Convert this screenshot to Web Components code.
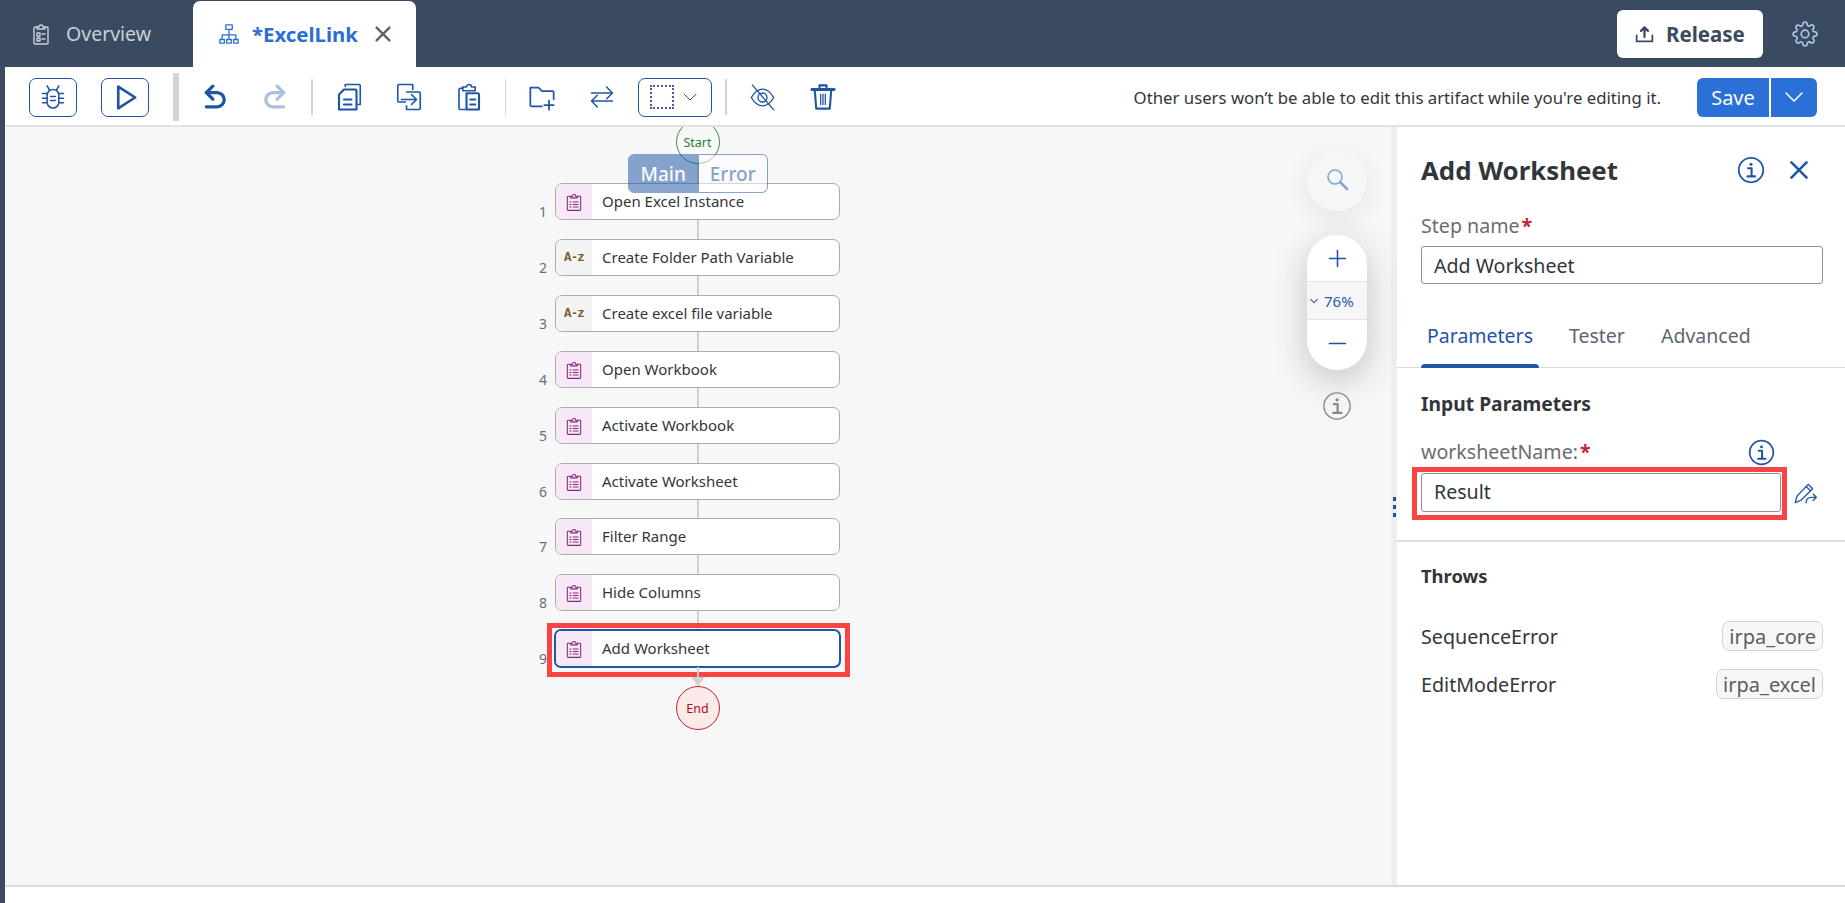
<!DOCTYPE html>
<html lang="en"><head><meta charset="utf-8"><title>ExcelLink</title>
<style>
html,body{margin:0;height:100%;overflow:hidden}
body{font-family:"Noto Sans","Open Sans",sans-serif;color:#32363a}
</style></head>
<body>
<app-shell>
  <app-header slot="header">
    <app-tab icon="overview">Overview</app-tab>
    <app-tab icon="tree" active closable>*ExcelLink</app-tab>
    <release-button slot="actions">Release</release-button>
    <ui-icon slot="actions" name="gear" size="26" style="color:#a9c1e3;margin-left:29px;margin-right:27px"></ui-icon>
  </app-header>
  <app-toolbar slot="toolbar" message="Other users won’t be able to edit this artifact while you're editing it."></app-toolbar>
  <flow-canvas slot="canvas">
    <flow-terminal kind="start">Start</flow-terminal>
    <flow-link></flow-link>
    <flow-step num="1" icon="clip">Open Excel Instance</flow-step><flow-link></flow-link>
    <flow-step num="2" icon="az">Create Folder Path Variable</flow-step><flow-link></flow-link>
    <flow-step num="3" icon="az">Create excel file variable</flow-step><flow-link></flow-link>
    <flow-step num="4" icon="clip">Open Workbook</flow-step><flow-link></flow-link>
    <flow-step num="5" icon="clip">Activate Workbook</flow-step><flow-link></flow-link>
    <flow-step num="6" icon="clip">Activate Worksheet</flow-step><flow-link short></flow-link>
    <flow-step num="7" icon="clip">Filter Range</flow-step><flow-link></flow-link>
    <flow-step num="8" icon="clip">Hide Columns</flow-step><flow-link></flow-link>
    <flow-step num="9" icon="clip" selected>Add Worksheet</flow-step><flow-link arrow></flow-link>
    <flow-terminal kind="end">End</flow-terminal>
    <segment-switch slot="over"></segment-switch>
    <zoom-controls slot="over"></zoom-controls>
  </flow-canvas>
  <side-panel slot="panel"></side-panel>
</app-shell>
<script>
const ICONS={
 overview:'<path d="M8 5H6a1 1 0 0 0-1 1v15a1 1 0 0 0 1 1h12a1 1 0 0 0 1-1V6a1 1 0 0 0-1-1h-2"/><path d="M8 7V5h2a2 2 0 0 1 4 0h2v2z"/><path d="M8 11h3v3H8zM8 16h3v3H8zM13 12h3M13 17h3"/>',
 tree:'<path d="M8.5 2h7v5h-7zM2 18h5v4H2zM9.5 18h5v4h-5zM17 18h5v4h-5zM12 7v11M4.5 18v-5h15v5"/>',
 x:'<path d="M5 5l14 14M19 5L5 19"/>',
 upload:'<path d="M12 16V5M8 9l4-4 4 4" stroke-width="2.6"/><path d="M3 14v7h18v-7" stroke-width="2"/>',
 gear:'<circle cx="12" cy="12" r="3.5"/><path d="M19.4 15a1.65 1.65 0 0 0 .33 1.82l.06.06a2 2 0 0 1 0 2.83 2 2 0 0 1-2.83 0l-.06-.06a1.65 1.65 0 0 0-1.82-.33 1.65 1.65 0 0 0-1 1.51V21a2 2 0 0 1-2 2 2 2 0 0 1-2-2v-.09A1.65 1.65 0 0 0 9 19.4a1.65 1.65 0 0 0-1.82.33l-.06.06a2 2 0 0 1-2.83 0 2 2 0 0 1 0-2.83l.06-.06a1.65 1.65 0 0 0 .33-1.82 1.65 1.65 0 0 0-1.51-1H3a2 2 0 0 1-2-2 2 2 0 0 1 2-2h.09A1.65 1.65 0 0 0 4.6 9a1.65 1.65 0 0 0-.33-1.82l-.06-.06a2 2 0 0 1 0-2.83 2 2 0 0 1 2.83 0l.06.06a1.65 1.65 0 0 0 1.82.33H9a1.65 1.65 0 0 0 1-1.51V3a2 2 0 0 1 2-2 2 2 0 0 1 2 2v.09a1.65 1.65 0 0 0 1 1.51 1.65 1.65 0 0 0 1.82-.33l.06-.06a2 2 0 0 1 2.83 0 2 2 0 0 1 0 2.83l-.06.06a1.65 1.65 0 0 0-.33 1.82V9a1.65 1.65 0 0 0 1.51 1H21a2 2 0 0 1 2 2 2 2 0 0 1-2 2h-.09a1.65 1.65 0 0 0-1.51 1z"/>',
 bug:'<rect x="7" y="5.5" width="10" height="16" rx="5"/><path d="M9 6L7 2.5M15 6l2-3.5M7 9H3M7 13H3M7 17H3M17 9h4M17 13h4M17 17h4M10 11.5h4M10 15h4"/>',
 play:'<path d="M6 3l14 9-14 9z" stroke-width="2.2"/>',
 undo:'<path d="M10 2L4 8l6 6" stroke-width="3"/><path d="M4 8h10a6 6 0 0 1 0 13H4" stroke-width="3"/>',
 redo:'<path d="M14 2l6 6-6 6" stroke-width="3"/><path d="M20 8H10a6 6 0 0 0 0 13h10" stroke-width="3"/>',
 copy:'<path d="M9 3.5V2h11a1 1 0 0 1 1 1v15h-2"/><path d="M8 6h9a1 1 0 0 1 1 1v15H4V10z" stroke-width="1.7"/><path d="M8 14h6M8 18h6" stroke-width="1.7"/>',
 paste2:'<path d="M9 16H4a1 1 0 0 1-1-1V3a1 1 0 0 1 1-1h11v4"/><path d="M10 8h10a1 1 0 0 1 1 1v12a1 1 0 0 1-1 1H10v-3"/><path d="M6 14h11M14 10l4 4-4 4"/>',
 clip:'<path d="M8 5H5a1 1 0 0 0-1 1v15a1 1 0 0 0 1 1h14a1 1 0 0 0 1-1V6a1 1 0 0 0-1-1h-3"/><path d="M8 7V5h2a2 2 0 0 1 4 0h2v2z"/><path d="M11 12h6M11 15h6M11 18h6M7 12h1.5M7 15h1.5M7 18h1.5"/>',
 paste:'<path d="M7 5H5a1 1 0 0 0-1 1v15a1 1 0 0 0 1 1h4"/><path d="M7 7V4h3a2 2 0 0 1 4 0h3v3z"/><path d="M10 9h9a1 1 0 0 1 1 1v12H10z" stroke-width="1.7"/><path d="M13 14h4M13 18h4" stroke-width="1.7"/>',
 folder:'<path d="M12 20H3a1 1 0 0 1-1-1V4h7l3 3h9a1 1 0 0 1 1 1v6" /><path d="M18 15v8M14 19h8" />',
 swap:'<path d="M3 8.500h18M16 3.500l5 5-5 5M21 15.500H3M8 10.500l-5 5 5 5"/>',
 chev:'<path d="M4 8l8 8 8-8"/>',
 eyeoff:'<path d="M2 12c3-5 6.500-7.500 10-7.500S19 7 22 12c-3 5-6.500 7.500-10 7.500S5 17 2 12z"/><circle cx="12" cy="12" r="4"/><path d="M3 1l19 22"/>',
 trash:'<path d="M2.500 5.500h19" stroke-width="2.500"/><path d="M9 4V2h6v2" stroke-width="1.800"/><path d="M5 7l1.200 15h11.600L19 7" stroke-width="1.800"/><path d="M10 9.500v9M12 9.500v9M14 9.500v9" stroke-width="1.100"/>',
 search:'<circle cx="10" cy="10" r="7"/><path d="M15 15l7 7" stroke-width="2.500"/>',
 plus:'<path d="M12 2v20M2 12h20"/>',
 minus:'<path d="M2 12h20"/>',
 info:'<circle cx="12" cy="12" r="10.500"/><circle cx="12" cy="7" r="1.300" fill="currentColor" stroke="none"/><path d="M9.500 10.500H12.500V17.500M9 17.500h6.500" stroke-width="1.800"/>',
 pencil:'<path d="M3 21l1.500-6L15 4l4 4L8.500 18.500z"/><path d="M13 6l4 4"/><path d="M13 21c0-3 2-5 5-5h4M19.500 13l3 3-3 3"/>'
};
const def=(n,c)=>customElements.define(n,c);
const shadow=(el,html)=>{el.attachShadow({mode:'open'}).innerHTML=html;return el.shadowRoot};

def('ui-icon',class extends HTMLElement{connectedCallback(){
  const s=this.getAttribute('size')||24,w=this.getAttribute('width')||1.6;
  shadow(this,`<style>:host{display:inline-flex;flex:none;line-height:0}</style><svg width="${s}" height="${s}" viewBox="0 0 24 24" fill="none" stroke="currentColor" stroke-width="${w}" stroke-linejoin="round" stroke-linecap="round">${ICONS[this.getAttribute('name')]||''}</svg>`)
}});

def('app-shell',class extends HTMLElement{connectedCallback(){
  shadow(this,`<style>
  :host{display:grid;grid-template-columns:5px 1fr 448px;grid-template-rows:67px 60px 758px 18px;height:903px;background:#fff}
  .h{grid-column:1/4}.strip{grid-column:1;grid-row:2/5;background:#3a4b61}
  .t{grid-column:2/4;grid-row:2}.c{grid-column:2;grid-row:3;min-width:0}.p{grid-column:3;grid-row:3;min-width:0}
  .f{grid-column:2/4;grid-row:4;border-top:2px solid #dadada;background:#fff}
  </style><div class="h"><slot name="header"></slot></div><div class="strip"></div><div class="t"><slot name="toolbar"></slot></div><div class="c"><slot name="canvas"></slot></div><div class="p"><slot name="panel"></slot></div><div class="f"></div>`)
}});

def('app-header',class extends HTMLElement{connectedCallback(){
  shadow(this,`<style>:host{display:flex;height:67px;background:#3a4b61;align-items:flex-end;box-sizing:border-box}
  .sp{flex:1}.a{display:flex;align-self:center;align-items:center}
  </style><slot></slot><div class="sp"></div><div class="a"><slot name="actions"></slot></div>`)
}});

def('app-tab',class extends HTMLElement{connectedCallback(){
  const a=this.hasAttribute('active');
  shadow(this,`<style>:host{display:flex;align-items:center;box-sizing:border-box;height:${a?66:67}px;width:${a?223:193}px;padding-left:${a?25:29}px;font-size:${a?20.4:19.5}px;color:${a?'#2b6fd4':'#c9d0d8'};font-weight:${a?700:400};background:${a?'#fff':'transparent'};border-radius:7px 7px 0 0}
  span{margin-left:${a?12:13}px}
  .x{margin-left:14px;color:#556578}
  </style><ui-icon name="${this.getAttribute('icon')}" size="${a?22:24}" width="1.400"></ui-icon><span><slot></slot></span>${this.hasAttribute('closable')?'<ui-icon class="x" name="x" size="22" width="2.600"></ui-icon>':''}`)
}});

def('release-button',class extends HTMLElement{connectedCallback(){
  shadow(this,`<style>:host{display:flex;align-items:center;width:146px;height:48px;box-sizing:border-box;padding-left:17px;gap:11px;background:#fff;border-radius:6px;font-size:20.500px;font-weight:700;color:#3a4b61}</style><ui-icon name="upload" size="21"></ui-icon><span><slot></slot></span>`)
}});

def('tool-btn',class extends HTMLElement{connectedCallback(){
  const box=this.hasAttribute('boxed');
  const o=this.getAttribute('color')||'#1f55a5';
  shadow(this,`<style>:host{display:flex;align-items:center;justify-content:center;box-sizing:border-box;width:${box?48:40}px;height:39px;color:${o};${box?'border:1.5px solid #1f55a5;border-radius:7px;':''}}</style><ui-icon name="${this.getAttribute('icon')}" size="${this.getAttribute('size')||26}" width="${this.getAttribute('stroke')||1.6}"></ui-icon>`)
}});

def('app-toolbar',class extends HTMLElement{connectedCallback(){
  shadow(this,`<style>
  :host{display:flex;align-items:center;height:60px;box-sizing:border-box;background:#fff;border-bottom:2px solid #e2e2e2;padding:2px 28px 0 24px;font-size:16.750px}
  .g{display:flex;gap:20px;align-items:center}.g.b{gap:24px}
  .thick{width:6px;height:48px;background:#d3d3d3;margin:0 16px 0 24px}
  .sep{width:1.5px;height:36px;background:#d3d3d3;margin:0 16px}
  .dd{display:flex;align-items:center;box-sizing:border-box;width:74px;height:39px;border:1.5px solid #1f55a5;border-radius:7px;padding-left:11px;gap:7px;color:#1f55a5;margin-left:-4px}
  .sq{width:24px;height:24px;flex:none;border:2px dotted #5e4fa8;box-sizing:border-box}
  .msg{margin-left:auto;color:#32363a;white-space:nowrap}
  .save{display:flex;height:39px;margin-left:36px;color:#fff;font-size:20px}
  .save b{font-weight:400;display:flex;align-items:center;justify-content:center;width:72px;background:#2b70d6;border-radius:6px 0 0 6px;margin-right:2px}
  .save i{display:flex;align-items:center;justify-content:center;width:46px;background:#2b70d6;border-radius:0 6px 6px 0}
  </style>
  <div class="g b"><tool-btn boxed icon="bug" size="28" stroke="1.300"></tool-btn><tool-btn boxed icon="play" size="29"></tool-btn></div>
  <div class="thick"></div>
  <div class="g"><tool-btn icon="undo"></tool-btn><tool-btn icon="redo" color="#abc0de"></tool-btn></div>
  <div class="sep"></div>
  <div class="g"><tool-btn icon="copy" size="30" stroke="1.300"></tool-btn><tool-btn icon="paste2" size="30" stroke="1.300"></tool-btn><tool-btn icon="paste" size="30" stroke="1.300"></tool-btn></div>
  <div class="sep"></div>
  <div class="g"><tool-btn icon="folder" size="28" stroke="1.500"></tool-btn><tool-btn icon="swap" size="28" stroke="1.300"></tool-btn><div class="dd"><div class="sq"></div><ui-icon name="chev" size="18" width="1.300"></ui-icon></div></div>
  <div class="sep" style="margin-left:13px"></div>
  <div class="g"><tool-btn icon="eyeoff" size="27" stroke="1.200"></tool-btn><tool-btn icon="trash" size="28"></tool-btn></div>
  <div class="msg">${this.getAttribute('message')}</div>
  <div class="save"><b>Save</b><i><ui-icon name="chev" size="24" width="1.500"></ui-icon></i></div>`)
}});

def('flow-canvas',class extends HTMLElement{connectedCallback(){
  shadow(this,`<style>:host{display:block;position:relative;height:758px;background:#f7f7f7;overflow:hidden}
  .col{display:flex;flex-direction:column;width:305px;margin:-7px 0 0 530px}
  .edge{position:absolute;top:0;bottom:0;right:0;width:6px;background:#eceef1}
  .dots{position:absolute;right:1px;top:370px;display:flex;flex-direction:column;gap:4px}
  .dots i{width:3px;height:4px;background:#1f55a5}
  </style><div class="col"><slot></slot></div><div class="edge"></div><div class="dots"><i></i><i></i><i></i></div><slot name="over"></slot>`)
}});

def('flow-terminal',class extends HTMLElement{connectedCallback(){
  const st=this.getAttribute('kind')==='start';
  shadow(this,`<style>:host{display:flex;justify-content:center;margin-left:20px;width:285px}
  div{width:44px;height:44px;box-sizing:border-box;border-radius:50%;display:flex;align-items:center;justify-content:center;font-size:12.500px;
  border:1.500px solid ${st?'#3f8f55':'#c4262e'};color:${st?'#2e7d3c':'#a80f1b'};background:${st?'#f7f9f7':'#fce9e9'}}</style><div><slot></slot></div>`)
}});

def('flow-link',class extends HTMLElement{connectedCallback(){
  const ar=this.hasAttribute('arrow');
  shadow(this,`<style>:host{display:block;position:relative;margin-left:20px;width:285px;height:${this.hasAttribute('short')?18:19}px}
  .l{position:absolute;left:142px;top:0;bottom:0;width:1.500px;background:#cfcfcf}
  .a{position:absolute;left:136px;bottom:0;width:0;height:0;border:7px solid transparent;border-bottom:0;border-top:9px solid #d2d2d2}
  </style><div class="l"></div>${ar?'<div class="a"></div>':''}`)
}});

def('flow-step',class extends HTMLElement{connectedCallback(){
  const az=this.getAttribute('icon')==='az',sel=this.hasAttribute('selected');
  shadow(this,`<style>:host{display:grid;grid-template-columns:20px 285px;height:37px;position:relative}
  .n{align-self:end;text-align:right;padding-right:8px;font-size:14px;line-height:16px;color:#6a6d70}
  .box{display:flex;box-sizing:border-box;height:37px;background:#fff;border-radius:7px;overflow:hidden;${sel?'border:2px solid #1f55a5;margin:-1px;height:39px;':'border:1.500px solid #a9acb2;'}}
  .ic{width:36px;flex:none;display:flex;align-items:center;justify-content:center;color:#8b2a7f;background:${az?'#f3f3f3':'#f6e9f5'};font:700 12.500px "Liberation Mono","DejaVu Sans Mono",monospace;letter-spacing:-.8px}
  .ic.az{color:#7a5a2a}
  .t{padding-left:10px;font-size:15px;line-height:35px;color:#32363a;white-space:nowrap}
  .hl{position:absolute;left:12px;right:-10px;top:-7px;bottom:-10px;border:5px solid #fa4444;box-sizing:border-box;pointer-events:none}
  </style><div class="n">${this.getAttribute('num')}</div>
  <div class="box"><div class="ic ${az?'az':''}">${az?'A-z':'<ui-icon name="clip" size="20" width="1.300"></ui-icon>'}</div><div class="t"><slot></slot></div></div>${sel?'<div class="hl"></div>':''}`)
}});

def('segment-switch',class extends HTMLElement{connectedCallback(){
  shadow(this,`<style>:host{position:absolute;left:623px;top:27px;display:flex;width:140px;height:39px;font-size:19px;font-weight:500;opacity:.52}
  div{flex:1;display:flex;align-items:center;justify-content:center;box-sizing:border-box;border:1.500px solid #1f55a5}
  .a{background:#1f55a5;color:#fff;border-radius:6px 0 0 6px}.b{background:#fff;color:#1f55a5;border-left:0;border-radius:0 6px 6px 0}</style><div class="a">Main</div><div class="b">Error</div>`)
}});

def('zoom-controls',class extends HTMLElement{connectedCallback(){
  shadow(this,`<style>:host{position:absolute;left:1302px;top:24px;width:60px;display:flex;flex-direction:column;align-items:center;color:#1f55a5}
  .s{width:60px;height:60px;border-radius:50%;background:#f5f6f7;display:flex;align-items:center;justify-content:center;color:#85a3d2;box-shadow:0 6px 26px rgba(60,70,90,.1);box-sizing:border-box;padding-bottom:5px}
  .p{margin-top:24px;width:60px;height:135px;border-radius:30px;background:#fff;overflow:hidden;display:flex;flex-direction:column;box-shadow:0 10px 34px rgba(50,60,80,.28)}
  .b{flex:1;display:flex;align-items:center;justify-content:center}
  .m{height:39px;flex:none;box-sizing:border-box;border-top:1px solid #e2e2e2;border-bottom:1px solid #e2e2e2;background:#f6f6f6;display:flex;align-items:center;padding:1px 0 0 2px;font-size:15px;gap:5px;color:#2f5ba6}
  .i{margin-top:21px;color:#85878a}
  </style><div class="s"><ui-icon name="search" size="24"></ui-icon></div>
  <div class="p"><div class="b"><ui-icon name="plus" size="19" width="2"></ui-icon></div><div class="m"><ui-icon name="chev" size="10" width="2.500"></ui-icon>76%</div><div class="b" style="padding-bottom:4px"><ui-icon name="minus" size="19" width="2.200"></ui-icon></div></div>
  <ui-icon class="i" name="info" size="30" width="1.100"></ui-icon>`)
}});

def('text-field',class extends HTMLElement{connectedCallback(){
  const hl=this.hasAttribute('highlight');
  shadow(this,`<style>:host{display:block;position:relative}
  .f{box-sizing:border-box;display:flex;align-items:center;height:${hl?39:38}px;border:1.500px solid #89919a;border-radius:3px;padding:0 0 ${hl?2:0}px 12px;font-size:19.600px;color:#32363a;background:#fff}
  .hl{position:absolute;left:-9px;right:-6px;top:-6px;bottom:-8px;border:5px solid #fa4444;box-sizing:border-box}</style><div class="f"><slot></slot></div>${hl?'<div class="hl"></div>':''}`)
}});

def('lib-row',class extends HTMLElement{connectedCallback(){
  shadow(this,`<style>:host{display:flex;align-items:center;justify-content:space-between;height:30px;font-size:19.700px;color:#32363a}
  .c{box-sizing:border-box;height:30px;display:flex;align-items:center;padding:0 6px;border:1.500px solid #d5d5d5;border-radius:7px;background:#f7f7f7;color:#5b5e62;font-size:20px}</style><span><slot></slot></span><div class="c">${this.getAttribute('lib')}</div>`)
}});

def('side-panel',class extends HTMLElement{connectedCallback(){
  shadow(this,`<style>
  :host{display:block;height:758px;background:#fff;box-sizing:border-box}
  .pad{padding:0 22px 0 24px}
  .hd{display:flex;align-items:center;height:32px;margin-top:27px;color:#1f55a5}
  h2{margin:0;flex:1;font-size:25.800px;line-height:32px;font-weight:700;color:#32363a}
  label{display:block;font-size:19.600px;line-height:24px;color:#6a6d70}
  label b{color:#c4262e;font-weight:700;margin-left:2px}
  .tabs{display:flex;height:58px;margin-top:26px;padding:0 24px;border-bottom:1.500px solid #dcdcdc;box-sizing:border-box;font-size:19.500px;gap:36px}
  .tabs span{color:#5b6672;padding-top:14px;line-height:24px}
  .tabs .on{color:#1f55a5;position:relative;padding:14px 6px 0;margin-right:-6px}
  .tabs .on::after{content:"";position:absolute;left:0;right:0;bottom:-1px;height:4px;background:#1f55a5;border-radius:4px 4px 0 0}
  h3{margin:0;font-size:19.300px;line-height:24px;font-weight:700;color:#32363a}
  .lab{display:flex;align-items:center;justify-content:space-between;margin-top:24px;padding-right:48px}
  .row{display:flex;align-items:center;margin-top:9px}
  .row text-field{width:360px}
  .pen{margin-left:11px;color:#1f55a5}
  hr{border:0;height:2px;background:#dedede;margin:28px 0 0}
  </style>
  <div class="pad"><div class="hd"><h2>Add Worksheet</h2><ui-icon name="info" size="28" width="1.500" style="margin-right:21px"></ui-icon><ui-icon name="x" size="26" width="2.400" style="margin-right:11px"></ui-icon></div>
  <label style="margin-top:28px">Step name<b>*</b></label>
  <text-field style="margin-top:8px">Add Worksheet</text-field></div>
  <div class="tabs"><span class="on">Parameters</span><span>Tester</span><span>Advanced</span></div>
  <div class="pad" style="padding-top:24px"><h3>Input Parameters</h3>
  <div class="lab"><label>worksheetName:<b>*</b></label><ui-icon name="info" size="27" width="1.500" style="color:#1f55a5;margin:-2px 0"></ui-icon></div>
  <div class="row"><text-field highlight>Result</text-field><ui-icon class="pen" name="pencil" size="26" width="1.200"></ui-icon></div></div>
  <hr>
  <div class="pad" style="padding-top:22px"><h3 style="font-size:18.400px">Throws</h3>
  <lib-row lib="irpa_core" style="margin-top:33px">SequenceError</lib-row>
  <lib-row lib="irpa_excel" style="margin-top:18px">EditModeError</lib-row></div>`)
}});
</script>
</body></html>
